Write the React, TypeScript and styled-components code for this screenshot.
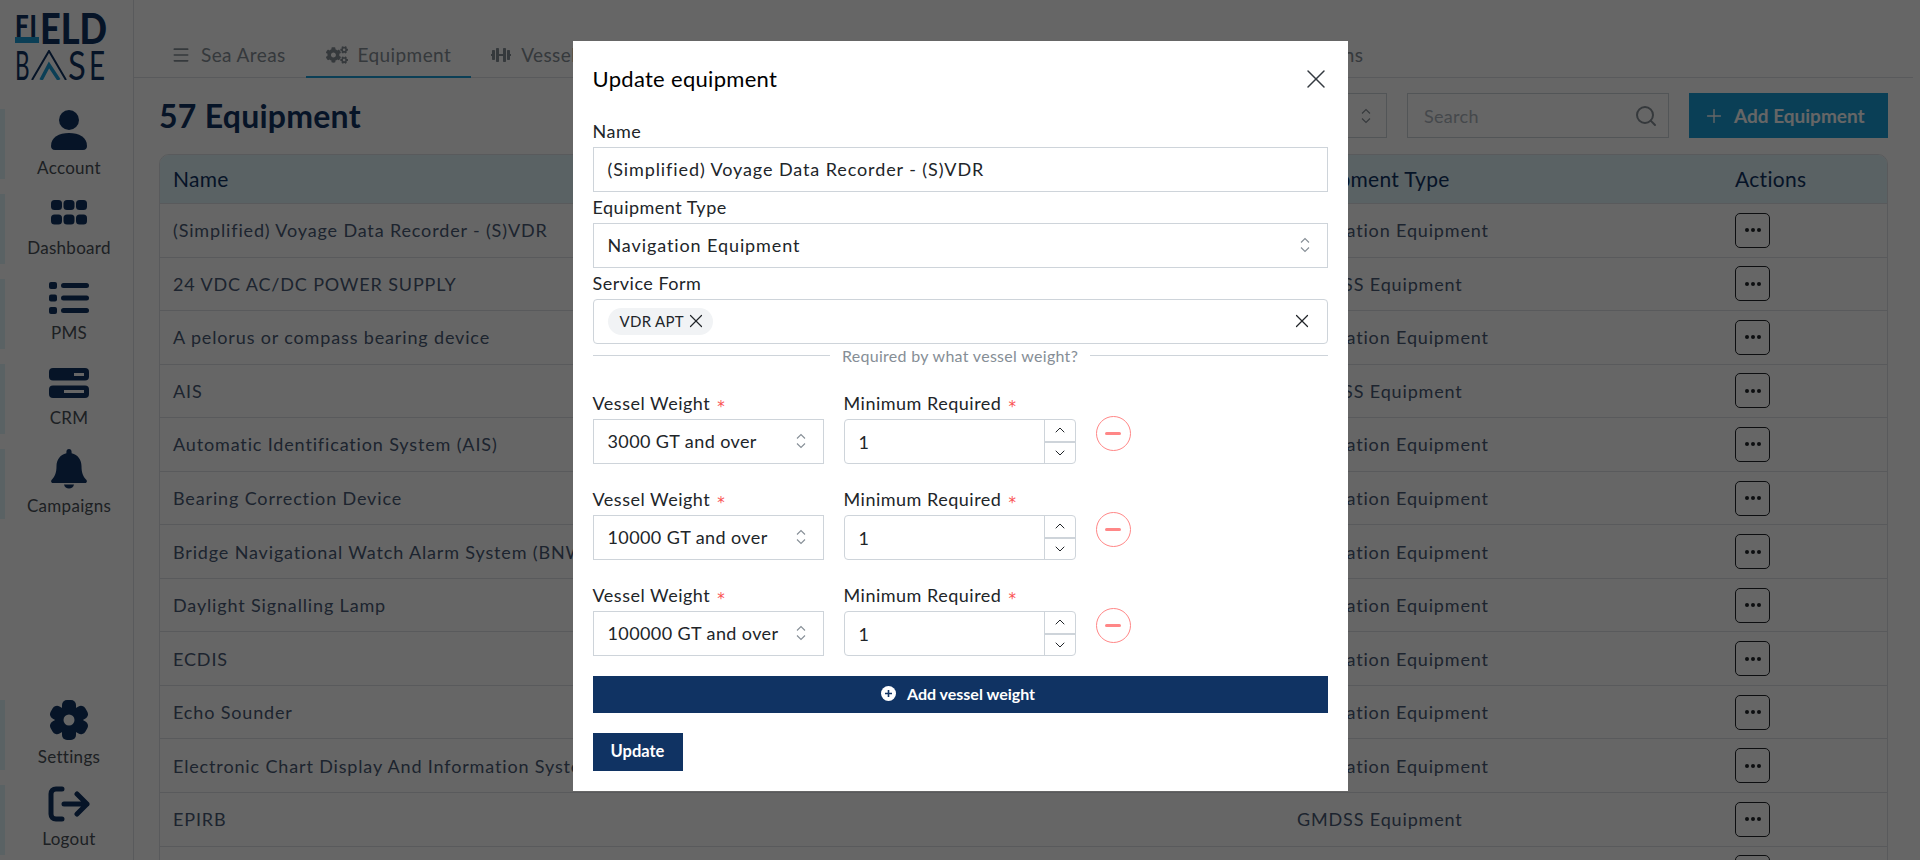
import React from 'react';
import styled, { createGlobalStyle } from 'styled-components';
import { ChevronDown, ChevronUp, Menu, Plus, Search, X } from 'lucide-react';
import { FaCogs, FaDumbbell } from 'react-icons/fa';

const navy = '#103363';
const fieldBorder = '#ced4da';

const GlobalStyle = createGlobalStyle`
  html, body, #root {
    margin: 0;
    height: 860px;
    overflow: hidden;
    background: #fff;
  }
  * {
    box-sizing: border-box;
  }
  body {
    font-family: 'Lato', 'Liberation Sans', sans-serif;
    font-size: 18px;
    letter-spacing: 0.3px;
    color: #212529;
  }
`;

const Shell = styled.div`
  display: flex;
  height: 860px;
  overflow: hidden;
`;

const Sidebar = styled.aside`
  flex: 0 0 134px;
  display: flex;
  flex-direction: column;
  justify-content: space-between;
  border-right: 1px solid #dee2e6;
  padding-bottom: 5px;
`;

const Logo = styled.div`
  height: 109px;
  padding: 13px 0 0 15px;
  color: ${navy};
`;

const LogoTop = styled.div`
  display: flex;
  align-items: flex-start;
  height: 31px;
`;

const LogoShort = styled.span`
  flex: 0 0 24px;
  min-width: 0;
  height: 30px;
  border-bottom: 6px solid #1c9fd8;
  margin-right: 1px;
`;

const LogoShortText = styled.span`
  display: block;
  font-size: 31px;
  font-weight: 900;
  line-height: 24px;
  letter-spacing: 1px;
  white-space: nowrap;
  transform: scaleX(0.78);
  transform-origin: left;
`;

const LogoTall = styled.span`
  font-size: 42px;
  font-weight: 900;
  line-height: 31px;
  letter-spacing: 0;
  transform: scaleX(0.86);
  transform-origin: left;
`;

const LogoBottom = styled.div`
  display: flex;
  align-items: center;
  height: 30px;
  margin-top: 6px;
`;

const LogoThin = styled.span<{ $width: number; $scale: number }>`
  flex: 0 0 ${({ $width }) => $width}px;
  min-width: 0;
  font-size: 41px;
  line-height: 30px;
  font-weight: 400;
  letter-spacing: 0;
  transform: scaleX(${({ $scale }) => $scale});
  transform-origin: left;
`;

const NavGroup = styled.nav`
  display: flex;
  flex-direction: column;
  gap: 15px;
`;

const NavItem = styled.a`
  display: flex;
  flex-direction: column;
  align-items: center;
  height: 70px;
  border-left: 5px solid #e0f4fa;
  color: #495057;
  font-size: 17px;
`;

const NavIcon = styled.span`
  display: flex;
  align-items: center;
  justify-content: center;
  height: 44px;
`;

const NavLabel = styled.span`
  line-height: 33px;
`;

const Main = styled.main`
  flex: 1;
  min-width: 0;
  padding-right: 7px;
`;

const TabBar = styled.div`
  display: flex;
  height: 45px;
  margin-top: 33px;
  padding-left: 17px;
  border-bottom: 1px solid #dee2e6;
`;

const Tab = styled.div<{ $active?: boolean; $width?: number }>`
  display: flex;
  align-items: center;
  gap: 10px;
  height: 45px;
  padding: 0 20px;
  flex: 0 0 ${({ $width }) => ($width ? `${$width}px` : 'auto')};
  color: #868e96;
  font-size: 19px;
  letter-spacing: 0.4px;
  white-space: nowrap;
  border-bottom: 2px solid ${({ $active }) => ($active ? '#1c9fd8' : 'transparent')};
`;

const Content = styled.div`
  padding: 15px 25px 0;
`;

const Toolbar = styled.div`
  display: flex;
  align-items: center;
  gap: 20px;
  height: 45px;
`;

const Heading = styled.h1`
  flex: 1;
  margin: 0;
  color: ${navy};
  font-size: 32px;
  font-weight: 700;
  letter-spacing: 0.25px;
`;

const FilterSelect = styled.div`
  display: flex;
  align-items: center;
  justify-content: flex-end;
  width: 200px;
  height: 45px;
  padding-right: 14px;
  border: 1px solid ${fieldBorder};
  color: #868e96;
`;

const SearchBox = styled.div`
  display: flex;
  align-items: center;
  justify-content: space-between;
  width: 262px;
  height: 45px;
  padding: 0 10px 0 16px;
  border: 1px solid ${fieldBorder};
  color: #adb5bd;
  svg {
    color: #868e96;
  }
`;

const AddButton = styled.button`
  display: flex;
  align-items: center;
  gap: 9px;
  width: 199px;
  height: 45px;
  padding: 0 0 0 14px;
  border: 0;
  background: #1a9ed8;
  color: #fff;
  font: inherit;
  font-size: 19px;
  font-weight: 700;
  letter-spacing: 0;
`;

const Table = styled.div`
  margin-top: 16px;
  border: 1px solid #dee2e6;
  border-radius: 10px 10px 0 0;
  overflow: hidden;
`;

const HeadRow = styled.div`
  display: grid;
  grid-template-columns: 1124px 438px 1fr;
  align-items: center;
  height: 49px;
  padding: 0 0 2px 13px;
  background: #e0f4fa;
  color: ${navy};
  font-size: 21px;
  border-bottom: 1px solid #dee2e6;
`;

const BodyRow = styled.div`
  display: grid;
  grid-template-columns: 1124px 438px 1fr;
  align-items: center;
  height: 53.55px;
  padding-left: 13px;
  color: #4a5a75;
  letter-spacing: 0.85px;
  white-space: nowrap;
  border-bottom: 1px solid #dee2e6;
`;

const DotsButton = styled.span`
  display: flex;
  align-items: center;
  justify-content: center;
  gap: 2px;
  width: 35px;
  height: 35px;
  border: 1px solid #212529;
  border-radius: 5px;
`;

const Dot = styled.i`
  width: 4px;
  height: 4px;
  border-radius: 50%;
  background: #212529;
`;

const Overlay = styled.div`
  position: fixed;
  inset: 0;
  display: flex;
  justify-content: center;
  align-items: flex-start;
  padding-top: 41px;
  background: rgba(0, 0, 0, 0.6);
`;

const Modal = styled.section`
  width: 775px;
  padding: 20px;
  background: #fff;
`;

const ModalHeader = styled.header`
  display: flex;
  align-items: center;
  justify-content: space-between;
  height: 36px;
  margin-bottom: 19px;
`;

const ModalTitle = styled.h2`
  margin: 0 0 2px;
  font-size: 22px;
  font-weight: 400;
  color: #000;
`;

const CloseButton = styled.span`
  display: flex;
  margin-right: -4px;
  color: #343a40;
`;

const Label = styled.label`
  display: block;
  height: 31px;
  line-height: 30px;
  letter-spacing: 0.5px;
  white-space: nowrap;
`;

const Required = styled.span`
  display: inline-block;
  margin-left: 7px;
  color: #fa5252;
  font-family: 'DejaVu Sans', sans-serif;
  font-size: 15px;
  line-height: 1;
  transform: translateY(2px);
`;

const Control = styled.div<{ $rounded?: boolean }>`
  display: flex;
  align-items: center;
  justify-content: space-between;
  height: 45px;
  padding: 0 16px 1px 14px;
  border: 1px solid ${fieldBorder};
  border-radius: ${({ $rounded }) => ($rounded ? '4px' : '0')};
  letter-spacing: 0.9px;
  white-space: nowrap;
`;

const WeightControl = styled(Control)`
  letter-spacing: 0.4px;
`;

const Chip = styled.span`
  display: flex;
  align-items: center;
  gap: 1px;
  height: 27px;
  padding: 0 6px 0 12px;
  border-radius: 14px;
  background: #f1f3f5;
  font-size: 15px;
  letter-spacing: 0.3px;
`;

const ClearIcon = styled.span`
  display: flex;
  margin-right: -2px;
`;

const Caret = styled.span`
  display: flex;
  flex-direction: column;
  color: #868e96;
`;

const DividerRow = styled.div`
  display: flex;
  align-items: center;
  gap: 12px;
  height: 22px;
  margin-bottom: 22px;
  color: #868e96;
  font-size: 16px;
  &::before,
  &::after {
    content: '';
    flex: 1;
    border-top: 1px solid ${fieldBorder};
  }
`;

const Stack = styled.div`
  display: flex;
  flex-direction: column;
  gap: 20px;
`;

const WeightRow = styled.div`
  display: grid;
  grid-template-columns: 231px 232px 35px;
  gap: 20px;
  align-items: end;
`;

const NumberControl = styled(Control)`
  padding-right: 0;
  padding-bottom: 0;
  overflow: hidden;
`;

const Spinner = styled.div`
  display: flex;
  flex-direction: column;
  width: 31px;
  height: 100%;
  border-left: 1px solid ${fieldBorder};
`;

const SpinButton = styled.span<{ $top?: boolean }>`
  flex: 1;
  display: flex;
  align-items: center;
  justify-content: center;
  color: #212529;
  border-bottom: ${({ $top }) => ($top ? `2px solid ${fieldBorder}` : '0')};
`;

const RemoveButton = styled.span`
  display: flex;
  align-items: center;
  justify-content: center;
  width: 35px;
  height: 35px;
  margin-bottom: 13px;
  border: 1px solid #ff8787;
  border-radius: 50%;
  &::after {
    content: '';
    width: 16px;
    height: 2.5px;
    border-radius: 2px;
    background: #ff8787;
  }
`;

const SubmitButton = styled.button<{ $wide?: boolean }>`
  display: flex;
  align-items: center;
  justify-content: center;
  gap: 11px;
  width: ${({ $wide }) => ($wide ? '100%' : '90px')};
  height: ${({ $wide }) => ($wide ? '37px' : '38px')};
  padding: 0 ${({ $wide }) => ($wide ? '4px' : '0')} 2px 0;
  border: 0;
  background: ${navy};
  color: #fff;
  font: inherit;
  font-size: ${({ $wide }) => ($wide ? '16px' : '16.5px')};
  font-weight: 700;
  letter-spacing: 0;
`;

const iconColor = navy;

const AccountIcon = () => (
  <svg width="36" height="42" viewBox="0 0 36 42" fill={iconColor}>
    <circle cx="18" cy="11" r="10" />
    <path d="M0 37c0-9 8-13 18-13s18 4 18 13c0 2-1 4-4 4H4c-3 0-4-2-4-4z" />
  </svg>
);

const DashboardIcon = () => (
  <svg width="36" height="25" viewBox="0 0 36 25" fill={iconColor}>
    {[0, 12.5, 25].map((x) =>
      [0, 14.5].map((y) => <rect key={`${x}-${y}`} x={x} y={y} width="11" height="10" rx="3.5" />),
    )}
  </svg>
);

const PmsIcon = () => (
  <svg width="40" height="32" viewBox="0 0 40 32" fill={iconColor}>
    {[0, 12.5, 25].map((y) => (
      <g key={y}>
        <rect x="0" y={y} width="8" height="7" rx="2" />
        <rect x="12" y={y + 1} width="28" height="5" rx="2.5" />
      </g>
    ))}
  </svg>
);

const CrmIcon = () => (
  <svg width="40" height="30" viewBox="0 0 40 30">
    <rect x="0" y="0" width="40" height="12.5" rx="4" fill={iconColor} />
    <rect x="0" y="17.5" width="40" height="12.5" rx="4" fill={iconColor} />
    <rect x="25" y="5" width="10" height="3" fill="#fff" />
    <rect x="15" y="22" width="20" height="3" fill="#fff" />
  </svg>
);

const BellIcon = () => (
  <svg width="36" height="40" viewBox="0 0 36 40" fill={iconColor}>
    <path d="M18 0c1.6 0 2.6 1.2 2.6 3v1.3C27 5.800 30.500 11 30.500 17c0 6.500 1.500 10.500 4.500 13.500.8.800 1 1.500.8 2.200-.2.700-.9 1.300-1.800 1.300H2c-.9 0-1.600-.6-1.800-1.300-.2-.7 0-1.400.8-2.200C4 27.500 5.500 23.500 5.500 17c0-6 3.500-11.200 9.900-12.700V3C15.400 1.200 16.400 0 18 0z" />
    <path d="M13 35.500h10c-.5 2.500-2.500 4-5 4s-4.500-1.500-5-4z" />
  </svg>
);

const GearIcon = () => (
  <svg width="40" height="40" viewBox="0 0 40 40">
    <circle cx="20" cy="20" r="14" fill={iconColor} />
    {[0, 60, 120].map((angle) => (
      <rect
        key={angle}
        x="13"
        y="0"
        width="14"
        height="40"
        rx="5"
        fill={iconColor}
        transform={`rotate(${angle} 20 20)`}
      />
    ))}
    <circle cx="20" cy="20" r="5.500" fill="#fff" />
  </svg>
);

const LogoutIcon = () => (
  <svg width="42" height="36" viewBox="0 0 42 36" fill="none" stroke={iconColor} strokeWidth="5" strokeLinecap="round" strokeLinejoin="round">
    <path d="M14 3H8C5 3 3 5 3 8v20c0 3 2 5 5 5h6" />
    <path d="M16 18h23M29 8l10 10-10 10" />
  </svg>
);

const SelectCaret = () => (
  <Caret>
    <svg width="12" height="16" viewBox="0 0 12 16" fill="none" stroke="currentColor" strokeWidth="1.100">
      <path d="M2 5.500 6 1.500l4 4M2 10.500l4 4 4-4" />
    </svg>
  </Caret>
);

const PlusCircle = () => (
  <svg width="15" height="15" viewBox="0 0 15 15">
    <circle cx="7.500" cy="7.500" r="7.500" fill="#fff" />
    <path d="M7.500 4v7M4 7.500h7" stroke={navy} strokeWidth="1.600" />
  </svg>
);

const LogoChevron = () => (
  <svg width="37" height="30" viewBox="0 0 37 30" fill="none">
    <path d="M1 30 18 1l17 29" stroke={navy} strokeWidth="2" />
    <path d="M10 30l8-15 10 15" stroke="#1c9fd8" strokeWidth="3.500" />
  </svg>
);

const topNav = [
  { label: 'Account', icon: <AccountIcon /> },
  { label: 'Dashboard', icon: <DashboardIcon /> },
  { label: 'PMS', icon: <PmsIcon /> },
  { label: 'CRM', icon: <CrmIcon /> },
  { label: 'Campaigns', icon: <BellIcon /> },
];

const bottomNav = [
  { label: 'Settings', icon: <GearIcon /> },
  { label: 'Logout', icon: <LogoutIcon /> },
];

const nav = 'Navigation Equipment';
const gmdss = 'GMDSS Equipment';

const equipment = [
  ['(Simplified) Voyage Data Recorder - (S)VDR', nav],
  ['24 VDC AC/DC POWER SUPPLY', gmdss],
  ['A pelorus or compass bearing device', nav],
  ['AIS', gmdss],
  ['Automatic Identification System (AIS)', nav],
  ['Bearing Correction Device', nav],
  ['Bridge Navigational Watch Alarm System (BNWAS)', nav],
  ['Daylight Signalling Lamp', nav],
  ['ECDIS', nav],
  ['Echo Sounder', nav],
  ['Electronic Chart Display And Information System', nav],
  ['EPIRB', gmdss],
  ['', ''],
];

const weights = ['3000 GT and over', '10000 GT and over', '100000 GT and over'];

export default function App() {
  return (
    <>
      <GlobalStyle />
      <Shell>
        <Sidebar>
          <div>
            <Logo>
              <LogoTop>
                <LogoShort>
                  <LogoShortText>FI</LogoShortText>
                </LogoShort>
                <LogoTall>ELD</LogoTall>
              </LogoTop>
              <LogoBottom>
                <LogoThin $width={16} $scale={0.55}>B</LogoThin>
                <LogoChevron />
                <LogoThin $width={21} $scale={0.8}>S</LogoThin>
                <LogoThin $width={16} $scale={0.68}>E</LogoThin>
              </LogoBottom>
            </Logo>
            <NavGroup>
              {topNav.map((item) => (
                <NavItem key={item.label}>
                  <NavIcon>{item.icon}</NavIcon>
                  <NavLabel>{item.label}</NavLabel>
                </NavItem>
              ))}
            </NavGroup>
          </div>
          <NavGroup>
            {bottomNav.map((item) => (
              <NavItem key={item.label}>
                <NavIcon>{item.icon}</NavIcon>
                <NavLabel>{item.label}</NavLabel>
              </NavItem>
            ))}
          </NavGroup>
        </Sidebar>
        <Main>
          <TabBar>
            <Tab>
              <Menu size={20} />
              Sea Areas
            </Tab>
            <Tab $active>
              <FaCogs size={22} />
              Equipment
            </Tab>
            <Tab $width={773}>
              <FaDumbbell size={20} />
              Vessel Types
            </Tab>
            <Tab>Inspections</Tab>
          </TabBar>
          <Content>
            <Toolbar>
              <Heading>57 Equipment</Heading>
              <FilterSelect>
                <SelectCaret />
              </FilterSelect>
              <SearchBox>
                Search
                <Search size={24} />
              </SearchBox>
              <AddButton>
                <Plus size={22} strokeWidth={1.500} />
                Add Equipment
              </AddButton>
            </Toolbar>
            <Table>
              <HeadRow>
                <span>Name</span>
                <span>Equipment Type</span>
                <span>Actions</span>
              </HeadRow>
              {equipment.map(([name, type], index) => (
                <BodyRow key={index}>
                  <span>{name}</span>
                  <span>{type}</span>
                  <DotsButton>
                    <Dot />
                    <Dot />
                    <Dot />
                  </DotsButton>
                </BodyRow>
              ))}
            </Table>
          </Content>
        </Main>
      </Shell>
      <Overlay>
        <Modal>
          <ModalHeader>
            <ModalTitle>Update equipment</ModalTitle>
            <CloseButton>
              <X size={32} strokeWidth={1.100} />
            </CloseButton>
          </ModalHeader>
          <Label>Name</Label>
          <Control>(Simplified) Voyage Data Recorder - (S)VDR</Control>
          <Label>Equipment Type</Label>
          <Control>
            Navigation Equipment
            <SelectCaret />
          </Control>
          <Label>Service Form</Label>
          <Control $rounded>
            <Chip>
              VDR APT
              <X size={22} strokeWidth={1.300} />
            </Chip>
            <ClearIcon>
              <X size={22} strokeWidth={1.300} />
            </ClearIcon>
          </Control>
          <DividerRow>Required by what vessel weight?</DividerRow>
          <Stack>
            {weights.map((weight) => (
              <WeightRow key={weight}>
                <div>
                  <Label>
                    Vessel Weight<Required>*</Required>
                  </Label>
                  <WeightControl>
                    {weight}
                    <SelectCaret />
                  </WeightControl>
                </div>
                <div>
                  <Label>
                    Minimum Required<Required>*</Required>
                  </Label>
                  <NumberControl $rounded>
                    1
                    <Spinner>
                      <SpinButton $top>
                        <ChevronUp size={16} strokeWidth={1.500} />
                      </SpinButton>
                      <SpinButton>
                        <ChevronDown size={16} strokeWidth={1.500} />
                      </SpinButton>
                    </Spinner>
                  </NumberControl>
                </div>
                <RemoveButton />
              </WeightRow>
            ))}
            <SubmitButton $wide type="button">
              <PlusCircle />
              Add vessel weight
            </SubmitButton>
            <SubmitButton type="button">Update</SubmitButton>
          </Stack>
        </Modal>
      </Overlay>
    </>
  );
}
